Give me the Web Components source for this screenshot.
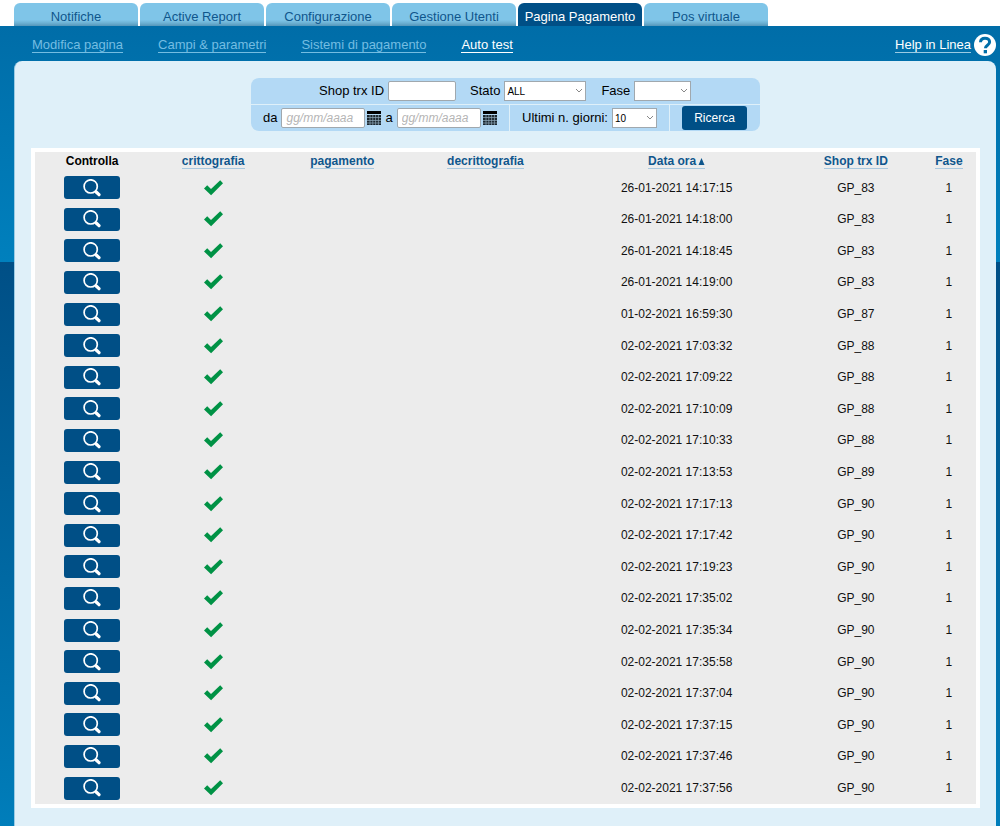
<!DOCTYPE html>
<html lang="it">
<head>
<meta charset="utf-8">
<title>Pagina Pagamento - Auto test</title>
<style>
  html { background: #fff; }
  body {
    margin: 0;
    min-height: 100vh;
    display: flex;
    flex-direction: column;
    font-family: "Liberation Sans", Arial, sans-serif;
    color: #111;
  }
  page-shell { flex: 1; }
</style>
</head>
<body>
<tab-bar>
  <tab-item>Notifiche</tab-item>
  <tab-item>Active Report</tab-item>
  <tab-item>Configurazione</tab-item>
  <tab-item>Gestione Utenti</tab-item>
  <tab-item active>Pagina Pagamento</tab-item>
  <tab-item>Pos virtuale</tab-item>
</tab-bar>
<page-shell>
  <sub-nav slot="nav"></sub-nav>
  <search-filter></search-filter>
  <trx-table></trx-table>
</page-shell>

<script>
function define(name, html, setup) {
  const template = document.createElement('template');
  template.innerHTML = html;
  customElements.define(name, class extends HTMLElement {
    constructor() {
      super();
      this.attachShadow({ mode: 'open' }).append(template.content.cloneNode(true));
    }
    connectedCallback() {
      if (setup && !this.ready) { this.ready = true; setup(this.shadowRoot, this); }
    }
  });
}

define('tab-item', `
<style>
  :host { display: block; flex: 0 1 124px; min-width: 0; }
  a {
    display: block; height: 23px; line-height: 28px; overflow: hidden;
    border-radius: 6px 6px 0 0; text-align: center; white-space: nowrap;
    font-size: 13px; text-decoration: none; color: #0f568c;
    background: linear-gradient(#7fc5e8 0 17px, #6db1d3 20px, #5596b9);
  }
  :host([active]) a { background: #004f86; color: #fff; }
</style>
<a href="#"><slot></slot></a>`);

define('tab-bar', `
<style>
  :host { display: block; padding: 3px 14px 0; }
  nav { display: flex; gap: 2px; }
</style>
<nav><slot></slot></nav>`);

define('page-shell', `
<style>
  :host {
    display: flex; flex-direction: column; padding: 0 4px 0 14px;
    background:
      linear-gradient(#006da8, #0080bd) top / 100% 236px no-repeat,
      linear-gradient(#004f86 236px, #007ab6 760px, #007ebb);
  }
  main {
    flex: 1; display: flex; flex-direction: column; align-items: center;
    padding: 17px 16px 18px; gap: 17px;
    background: #dff0f9; border-radius: 8px 8px 0 0;
    border-left: 1px solid #9bcbe4;
  }
  ::slotted(trx-table) { align-self: stretch; }
</style>
<slot name="nav"></slot>
<main><slot></slot></main>`);

define('help-icon', `
<style>
  :host { display: block; flex: none; }
  svg { display: block; }
</style>
<svg width="22" height="22" viewBox="0 0 22 22" aria-hidden="true">
  <circle cx="11" cy="11" r="11" fill="#fff"/>
  <path d="M6.500 8.300C6.600 5.300 8.400 4.200 11 4.200c2.700 0 4.600 1.500 4.600 3.800 0 3.200-4.200 3.200-4.200 6.300" fill="none" stroke="#006ea8" stroke-width="3"/>
  <rect x="9.700" y="16" width="3.300" height="3.300" fill="#006ea8"/>
</svg>`);

define('sub-nav', `
<style>
  :host { display: block; }
  nav { display: flex; align-items: center; height: 35px; padding-left: 18px; gap: 35px; font-size: 13px; line-height: 15px; white-space: nowrap; }
  a { padding-top: 2px; color: #74bde2; text-decoration: none; border-bottom: 1px solid #74bde2; }
  a.current { color: #fff; border-color: #fff; }
  .help { margin-left: auto; display: flex; align-items: center; gap: 3px; border: 0; color: #fff; }
  .help span { border-bottom: 1px solid #9bcbe4; }
</style>
<nav>
  <a href="#">Modifica pagina</a>
  <a href="#">Campi &amp; parametri</a>
  <a href="#">Sistemi di pagamento</a>
  <a href="#" class="current">Auto test</a>
  <a href="#" class="help"><span>Help in Linea</span><help-icon></help-icon></a>
</nav>`);

define('calendar-icon', `
<style>
  :host { display: block; flex: none; }
  svg { display: block; }
</style>
<svg width="14" height="14" viewBox="0 0 14 14" aria-hidden="true">
  <rect width="14" height="14" fill="#1a252d"/>
  <rect width="14" height="3" fill="#000"/>
  <rect x="0" y="3" width="14" height="1" fill="#b3d9f5"/>
  <path d="M0 6.500h14M0 9.500h14M0 12h14M3 4v10M5.800 4v10M8.600 4v10M11.400 4v10" stroke="#8fa9ba" stroke-width=".7"/>
</svg>`);

define('search-filter', `
<style>
  :host { display: block; width: 509px; max-width: 100%; }
  form { display: grid; gap: 1px; border-radius: 8px; overflow: hidden; background: #dff0f9; font-size: 13px; line-height: 16px; white-space: nowrap; color: #000; }
  .row { display: flex; gap: 1px; height: 26px; }
  .cell { display: flex; align-items: center; background: #b3d9f5; }
  .top { flex: 1; padding-left: 68px; }
  .dates { flex: 0 0 246px; padding-left: 12px; }
  .days { flex: 1; padding-left: 12px; }
  .go { flex: 0 0 78px; padding-left: 12px; }
  input, select {
    box-sizing: border-box; margin: 0; height: 20px; border: 1px solid #a0a8ae;
    background: #fff; font: 12px "Liberation Sans", Arial, sans-serif; color: #000;
  }
  input { border-radius: 2px; padding: 0 4px; }
  input::placeholder { color: #b5b5b5; font-style: italic; opacity: 1; }
  select { appearance: none; width: 100%; padding: 0 2px; border-radius: 0; font-size: 10px; grid-area: 1 / 1; }
  .pick { display: grid; align-items: center; }
  .pick svg { grid-area: 1 / 1; justify-self: end; margin-right: 3px; pointer-events: none; }
  label { margin-right: 4px; }
  .id { width: 68px; margin-right: 14px; }
  .date { width: 84px; margin-right: 2px; }
  calendar-icon { margin-right: 4px; }
  .state { width: 82px; margin-right: 15px; }
  .phase { width: 57px; }
  .count { width: 45px; }
  button { width: 65px; height: 24px; padding: 0; border: 0; border-radius: 3px; background: #004f86; color: #fff; font: 12px "Liberation Sans", Arial, sans-serif; }
</style>
<form>
  <div class="row">
    <div class="cell top">
      <label for="trx">Shop trx ID</label><input id="trx" class="id" type="text">
      <label for="state">Stato</label>
      <span class="pick state"><select id="state"><option>ALL</option></select><svg width="8" height="6"><path d="M1 1l3 3 3-3" fill="none" stroke="#888"/></svg></span>
      <label for="phase">Fase</label>
      <span class="pick phase"><select id="phase"><option></option></select><svg width="8" height="6"><path d="M1 1l3 3 3-3" fill="none" stroke="#888"/></svg></span>
    </div>
  </div>
  <div class="row">
    <div class="cell dates">
      <label for="from">da</label><input id="from" class="date" type="text" placeholder="gg/mm/aaaa"><calendar-icon></calendar-icon>
      <label for="to">a</label><input id="to" class="date" type="text" placeholder="gg/mm/aaaa"><calendar-icon></calendar-icon>
    </div>
    <div class="cell days">
      <label for="days">Ultimi n. giorni:</label>
      <span class="pick count"><select id="days"><option>10</option></select><svg width="8" height="6"><path d="M1 1l3 3 3-3" fill="none" stroke="#888"/></svg></span>
    </div>
    <div class="cell go"><button type="button">Ricerca</button></div>
  </div>
</form>`);

define('check-button', `
<style>
  :host { display: block; width: 56px; margin: 0 auto; }
  button { display: flex; justify-content: center; align-items: center; width: 100%; height: 23px; padding: 0; border: 0; border-radius: 3px; background: #004f86; }
</style>
<button type="button" aria-label="Controlla">
  <svg width="18" height="18" viewBox="0 0 18 18" aria-hidden="true">
    <circle cx="7.700" cy="7.400" r="6.600" fill="none" stroke="#fff" stroke-width="1.700"/>
    <path d="M12 12l1.500 1.500" stroke="#fff" stroke-width="1.800"/>
    <path d="M13.200 13l2.800 2.700" stroke="#fff" stroke-width="3.200" stroke-linecap="round"/>
  </svg>
</button>`);

define('ok-mark', `
<style>
  :host { display: block; width: 19px; margin: 0 auto; }
  svg { display: block; }
</style>
<svg width="19" height="16" viewBox="0 0 19 16" role="img" aria-label="OK">
  <path d="M0 8.400L3.200 5.200 7 9 16.200.3 19 3.200 7.100 15.200z" fill="#009245"/>
</svg>`);

const transactions = [
  ['26-01-2021 14:17:15', 'GP_83'], ['26-01-2021 14:18:00', 'GP_83'],
  ['26-01-2021 14:18:45', 'GP_83'], ['26-01-2021 14:19:00', 'GP_83'],
  ['01-02-2021 16:59:30', 'GP_87'], ['02-02-2021 17:03:32', 'GP_88'],
  ['02-02-2021 17:09:22', 'GP_88'], ['02-02-2021 17:10:09', 'GP_88'],
  ['02-02-2021 17:10:33', 'GP_88'], ['02-02-2021 17:13:53', 'GP_89'],
  ['02-02-2021 17:17:13', 'GP_90'], ['02-02-2021 17:17:42', 'GP_90'],
  ['02-02-2021 17:19:23', 'GP_90'], ['02-02-2021 17:35:02', 'GP_90'],
  ['02-02-2021 17:35:34', 'GP_90'], ['02-02-2021 17:35:58', 'GP_90'],
  ['02-02-2021 17:37:04', 'GP_90'], ['02-02-2021 17:37:15', 'GP_90'],
  ['02-02-2021 17:37:46', 'GP_90'], ['02-02-2021 17:37:56', 'GP_90']
];

define('trx-table', `
<style>
  :host { display: block; border: 4px solid #fff; background: #ececec; }
  table { width: 100%; table-layout: fixed; border-collapse: collapse; font-size: 12px; line-height: 14px; text-align: center; }
  th, td { padding: 0; }
  th { height: 18px; padding-bottom: 2px; color: #000; white-space: nowrap; }
  th a { display: inline-block; color: #0f568c; text-decoration: none; border-bottom: 1px solid #a9c8df; }
  th svg { margin-left: 2px; }
  td { height: 32px; }
  tr:nth-child(5n+1) td, tr:nth-child(5n+3) td { height: 31px; }
</style>
<table>
  <colgroup>
    <col style="width:114px"><col style="width:128px"><col style="width:130px"><col style="width:156px"><col style="width:226px"><col style="width:132px"><col style="width:54px">
  </colgroup>
  <thead><tr>
    <th scope="col">Controlla</th>
    <th scope="col"><a href="#">crittografia</a></th>
    <th scope="col"><a href="#">pagamento</a></th>
    <th scope="col"><a href="#">decrittografia</a></th>
    <th scope="col"><a href="#">Data ora<svg width="7" height="7" aria-hidden="true"><path d="M3.500 0L6.500 7h-6z" fill="#0f568c"/></svg></a></th>
    <th scope="col"><a href="#">Shop trx ID</a></th>
    <th scope="col"><a href="#">Fase</a></th>
  </tr></thead>
  <tbody></tbody>
</table>`, root => {
  root.querySelector('tbody').innerHTML = transactions.map(([date, id]) =>
    `<tr><td><check-button></check-button></td><td><ok-mark></ok-mark></td><td></td><td></td><td>${date}</td><td>${id}</td><td>1</td></tr>`
  ).join('');
});
</script>
</body>
</html>
